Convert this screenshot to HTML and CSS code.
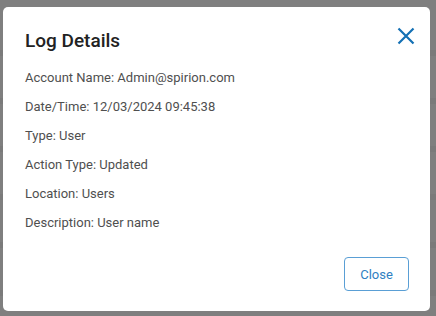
FILE: index.html
```html
<!DOCTYPE html>
<html lang="en">
<head>
    <meta charset="UTF-8">
    <title>Log Details</title>
    <link rel="stylesheet" href="styles.css">
</head>
<body>

    <!-- Backdrop rows behind the modal -->
    <div class="backdrop">
        <div class="row"></div>
        <div class="row"></div>
        <div class="row"></div>
        <div class="row"></div>
        <div class="row"></div>
        <div class="row"></div>
    </div>

    <!-- Modal -->
    <div class="modal">
        <div class="modal-header">
            <h2>Log Details</h2>
            <button class="icon-btn" aria-label="Close">
                <svg width="18" height="18" viewBox="0 0 18 18">
                    <path d="M1.5 1.5 L16.5 16.5 M16.5 1.5 L1.5 16.5" stroke="#1470b4" stroke-width="2.2" fill="none"/>
                </svg>
            </button>
        </div>
        <div class="modal-body">
            <p>Account Name: Admin@spirion.com</p>
            <p>Date/Time: 12/03/2024 09:45:38</p>
            <p>Type: User</p>
            <p>Action Type: Updated</p>
            <p>Location: Users</p>
            <p>Description: User name</p>
        </div>
        <div class="modal-footer">
            <button class="btn">Close</button>
        </div>
    </div>

</body>
</html>
```

FILE: styles.css
```css
* {
    margin: 0;
    padding: 0;
    box-sizing: border-box;
    font-family: 'Roboto', sans-serif;
}
body {
    width: 436px;
    height: 316px;
    overflow: hidden;
    background-color: #7f7f7f;
    position: relative;
}
.backdrop {
    display: flex;
    flex-direction: column;
    padding-top: 8px;
}
.backdrop .row {
    height: 48px;
    border-bottom: 6px solid #7a7a7a;
}
.modal {
    position: absolute;
    left: 3px;
    top: 7px;
    width: 427px;
    height: 304px;
    background: #fff;
    border-radius: 5px;
    padding: 20px 21px 20px 22px;
    display: flex;
    flex-direction: column;
}
.modal-header {
    display: flex;
    justify-content: space-between;
    align-items: flex-start;
}
.modal-header h2 {
    font-size: 19px;
    font-weight: 500;
    color: #222;
    margin-top: 2px;
}
.icon-btn {
    background: none;
    border: none;
    cursor: pointer;
    margin-right: -6px;
    width: 18px;
    height: 18px;
}
.modal-body {
    margin-top: 18px;
}
.modal-body p {
    font-size: 13px;
    color: #4f4f4f;
    height: 29px;
    line-height: 15px;
}
.modal-footer {
    margin-top: auto;
    display: flex;
    justify-content: flex-end;
}
.btn {
    width: 65px;
    height: 34px;
    background: #fff;
    border: 1px solid #5a9fd5;
    border-radius: 4px;
    color: #2f80c2;
    font-size: 13px;
    cursor: pointer;
}
```
